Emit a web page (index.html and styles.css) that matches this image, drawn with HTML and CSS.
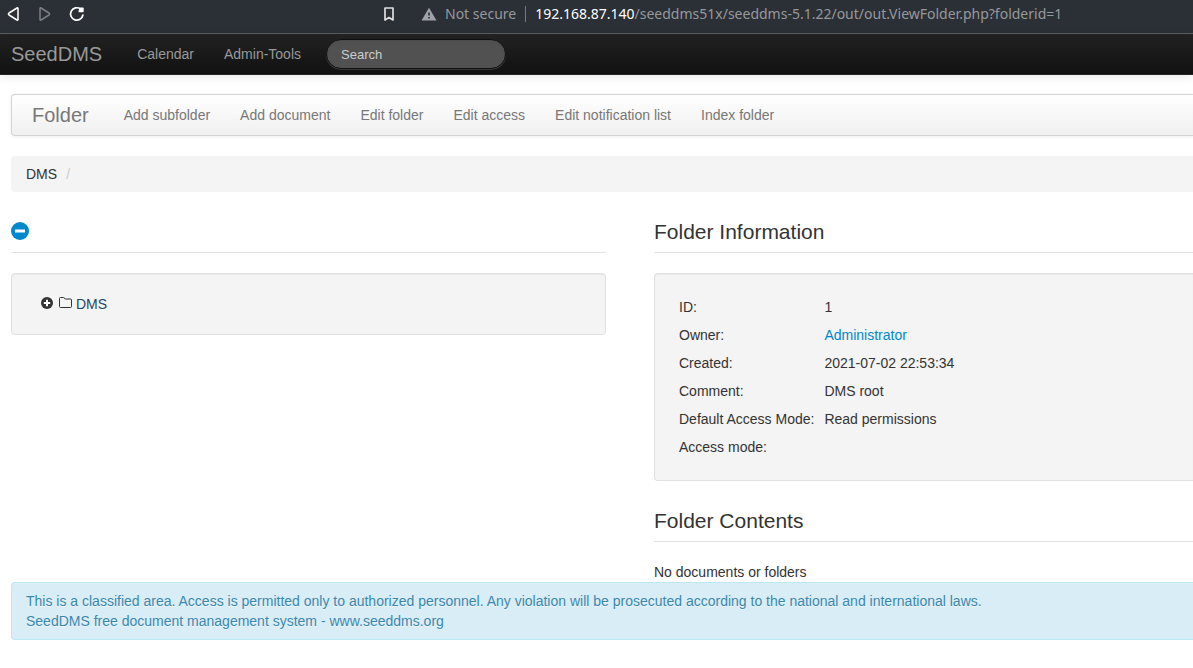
FILE: index.html
```html
<!DOCTYPE html>
<html lang="en">
<head>
<meta charset="utf-8">
<title>SeedDMS: Folder</title>
<link rel="stylesheet" href="styles.css">
</head>
<body>
<div class="browser">
  <div class="browser-nav">
    <button class="tool" type="button" aria-label="Back"><svg width="14" height="16" viewBox="0 0 14 16" fill="none" stroke="#fff" stroke-width="1.5" stroke-linejoin="round"><path d="M11 2.500v11Q11 14.600 10 14L2 9Q.8 8 2 7l8-5Q11 1.400 11 2.500Z"/></svg></button>
    <button class="tool" type="button" aria-label="Forward" disabled><svg width="14" height="16" viewBox="0 0 14 16" fill="none" stroke="#7d8083" stroke-width="1.5" stroke-linejoin="round"><path d="M2 2.500v11q0 1.100 1 .5l8-5q1.200-1 0-2L3 2Q2 1.400 2 2.500Z"/></svg></button>
    <button class="tool" type="button" aria-label="Reload"><svg width="16" height="16" viewBox="0 0 16 16" fill="none" stroke="#fff" stroke-width="1.700" stroke-linecap="round"><path d="M11.500 3A6.200 6.200 0 1 0 13.900 9"/><path fill="#fff" stroke="none" d="M14.700 2V5.500q0 .8-.8.8H10q-.7 0-.5-.8L10.300 2q.2-.6.9-.6h2.700q.8 0 .8.6Z"/></svg></button>
  </div>
  <button class="tool bookmark" type="button" aria-label="Bookmark"><svg width="12" height="16" viewBox="0 0 12 16" fill="none" stroke="#dedede" stroke-width="1.700" stroke-linejoin="round"><path d="M2 2h8v12l-4-2.500L2 14Z"/></svg></button>
  <div class="security">
    <svg width="16" height="14" viewBox="0 0 16 14"><path fill="#9fa3a8" d="M8 .8 15.500 13.500H.5Z"/><path stroke="#2b2f36" stroke-width="1.600" d="M8 5.500v3M8 10v1.600"/></svg>
    <span>Not secure</span>
  </div>
  <div class="address"><b class="host">192.168.87.140</b>/seeddms51x/seeddms-5.1.22/out/out.ViewFolder.php?folderid=1</div>
</div>
<header class="topbar">
  <a class="brand" href="#">SeedDMS</a>
  <nav class="links"><a href="#">Calendar</a><a href="#">Admin-Tools</a></nav>
  <input class="search" type="search" placeholder="Search" aria-label="Search">
</header>
<main class="page">
  <nav class="folderbar">
    <a class="brand" href="#">Folder</a>
    <div class="links"><a href="#">Add subfolder</a><a href="#">Add document</a><a href="#">Edit folder</a><a href="#">Edit access</a><a href="#">Edit notification list</a><a href="#">Index folder</a></div>
  </nav>
  <nav class="breadcrumb"><span>DMS</span><span class="divider">/</span></nav>
  <div class="columns">
    <section>
      <div class="legend"><button class="toggle" type="button" aria-label="Collapse tree"><svg width="18" height="18" viewBox="0 0 18 18"><circle cx="9" cy="9" r="9" fill="#08c"/><path fill="#fff" d="M4 7.500h10v3H4Z"/></svg></button></div>
      <div class="well tree">
        <button class="toggle" type="button" aria-label="Expand DMS"><svg width="12" height="12" viewBox="0 0 12 12"><circle cx="6" cy="6" r="6" fill="#333"/><path stroke="#fff" stroke-width="2" d="M6 2.800v6.400M2.800 6h6.400"/></svg></button>
        <svg width="13" height="12" viewBox="0 0 13 12" fill="none" stroke="#333"><path d="M.5 1.500Q.5.500 1.500.5h3Q5.500.5 5.500 1.500 5.500 2 6.500 2h5Q12.500 2 12.500 3v6.500q0 1-1 1h-10q-1 0-1-1Z"/></svg>
        <a href="#">DMS</a>
      </div>
    </section>
    <section>
      <h2 class="legend">Folder Information</h2>
      <div class="well">
        <table class="info">
          <tr><th scope="row">ID:</th><td>1</td></tr>
          <tr><th scope="row">Owner:</th><td><a href="#">Administrator</a></td></tr>
          <tr><th scope="row">Created:</th><td>2021-07-02 22:53:34</td></tr>
          <tr><th scope="row">Comment:</th><td>DMS root</td></tr>
          <tr><th scope="row">Default Access Mode:</th><td>Read permissions</td></tr>
          <tr><th scope="row">Access mode:</th><td></td></tr>
        </table>
      </div>
      <h2 class="legend">Folder Contents</h2>
      <p class="empty">No documents or folders</p>
    </section>
  </div>
  <footer class="notice">This is a classified area. Access is permitted only to authorized personnel. Any violation will be prosecuted according to the national and international laws.<br>SeedDMS free document management system - www.seeddms.org</footer>
</main>
</body>
</html>
```
FILE: styles.css
```css
* { box-sizing: border-box; }
body {
  margin: 0;
  overflow-x: hidden;
  background: #fff;
  color: #333;
  font: 14px/20px "Liberation Sans", Arial, sans-serif;
}
a { color: #08c; text-decoration: none; }
button { padding: 0; border: 0; background: none; }
svg { display: block; }

.browser {
  display: flex;
  align-items: center;
  height: 34px;
  padding: 0 7px 6px;
  border-bottom: 1px solid #5a605f;
  background: #2b2f36;
  color: #96999c;
  font: 14px/20px "Noto Sans", sans-serif;
  white-space: nowrap;
}
.browser-nav { display: flex; gap: 17px; }
.bookmark { margin-left: 298px; }
.security {
  display: flex;
  align-items: center;
  gap: 8px;
  margin-left: 26px;
  padding-right: 9px;
  line-height: 16px;
  border-right: 1px solid #777b80;
}
.address { margin-left: 9px; }
.host { color: #fff; font-weight: 400; }

.topbar {
  display: flex;
  align-items: center;
  height: 41px;
  padding-left: 11px;
  border-bottom: 1px solid #252525;
  background: linear-gradient(#222, #111);
  box-shadow: 0 1px 10px rgba(0, 0, 0, .1);
}
.brand { font-size: 20px; }
.links { display: flex; gap: 30px; margin-left: 35px; }
.topbar a { color: #999; }
.search {
  width: 180px;
  height: 30px;
  margin: 0 0 0 25px;
  padding: 0 14px;
  border: 1px solid #111;
  border-radius: 15px;
  outline: 0;
  background: #515151;
  box-shadow: inset 0 1px 2px rgba(0, 0, 0, .1), 0 1px 0 rgba(255, 255, 255, .15);
  color: #fff;
  font: 13px/18px "Liberation Sans", Arial, sans-serif;
  appearance: none;
}
.search::placeholder { color: #ccc; }

.page { padding: 19px 0 20px 11px; }
.folderbar {
  display: flex;
  align-items: center;
  height: 42px;
  margin-bottom: 20px;
  padding-left: 20px;
  border: 1px solid #d4d4d4;
  border-right: 0;
  border-radius: 4px 0 0 4px;
  background: linear-gradient(#fff, #f0f0f0);
  box-shadow: 0 1px 4px rgba(0, 0, 0, .07);
}
.folderbar a { color: #777; }
.breadcrumb {
  display: flex;
  gap: 9px;
  margin-bottom: 20px;
  padding: 8px 15px;
  border-radius: 4px 0 0 4px;
  background: #f4f4f4;
}
.divider { color: #ccc; }

.columns { display: grid; grid-template-columns: 595fr 539fr; column-gap: 48px; }
.legend {
  display: flex;
  align-items: center;
  height: 41px;
  margin: 0 0 20px;
  border-bottom: 1px solid #e3e3e3;
  font-size: 21px;
  font-weight: 400;
  line-height: 40px;
}
.toggle, .tree > svg { margin-bottom: 2px; }
.well {
  margin-bottom: 20px;
  padding: 19px;
  border: 1px solid #e1e1e1;
  border-radius: 4px;
  background: #f4f4f4;
  box-shadow: inset 0 1px 1px rgba(0, 0, 0, .05);
}
.well:has(.info) { border-right: 0; border-radius: 4px 0 0 4px; }
.tree { display: flex; align-items: center; padding: 20px 29px; }
.tree .toggle { margin-right: 6px; }
.tree > svg { margin-right: 4px; }
.tree a { color: #1d4863; }
.info { border-spacing: 0; }
.info th, .info td {
  height: 28px;
  padding: 4px 5px;
  font-weight: 400;
  text-align: left;
}
.empty { margin: 0; }
.notice {
  padding: 8px 14px;
  border: 1px solid #bce8f1;
  border-right: 0;
  border-radius: 4px 0 0 4px;
  background: #d9edf7;
  color: #3a87ad;
  text-shadow: 0 1px 0 rgba(255, 255, 255, .5);
}
```
